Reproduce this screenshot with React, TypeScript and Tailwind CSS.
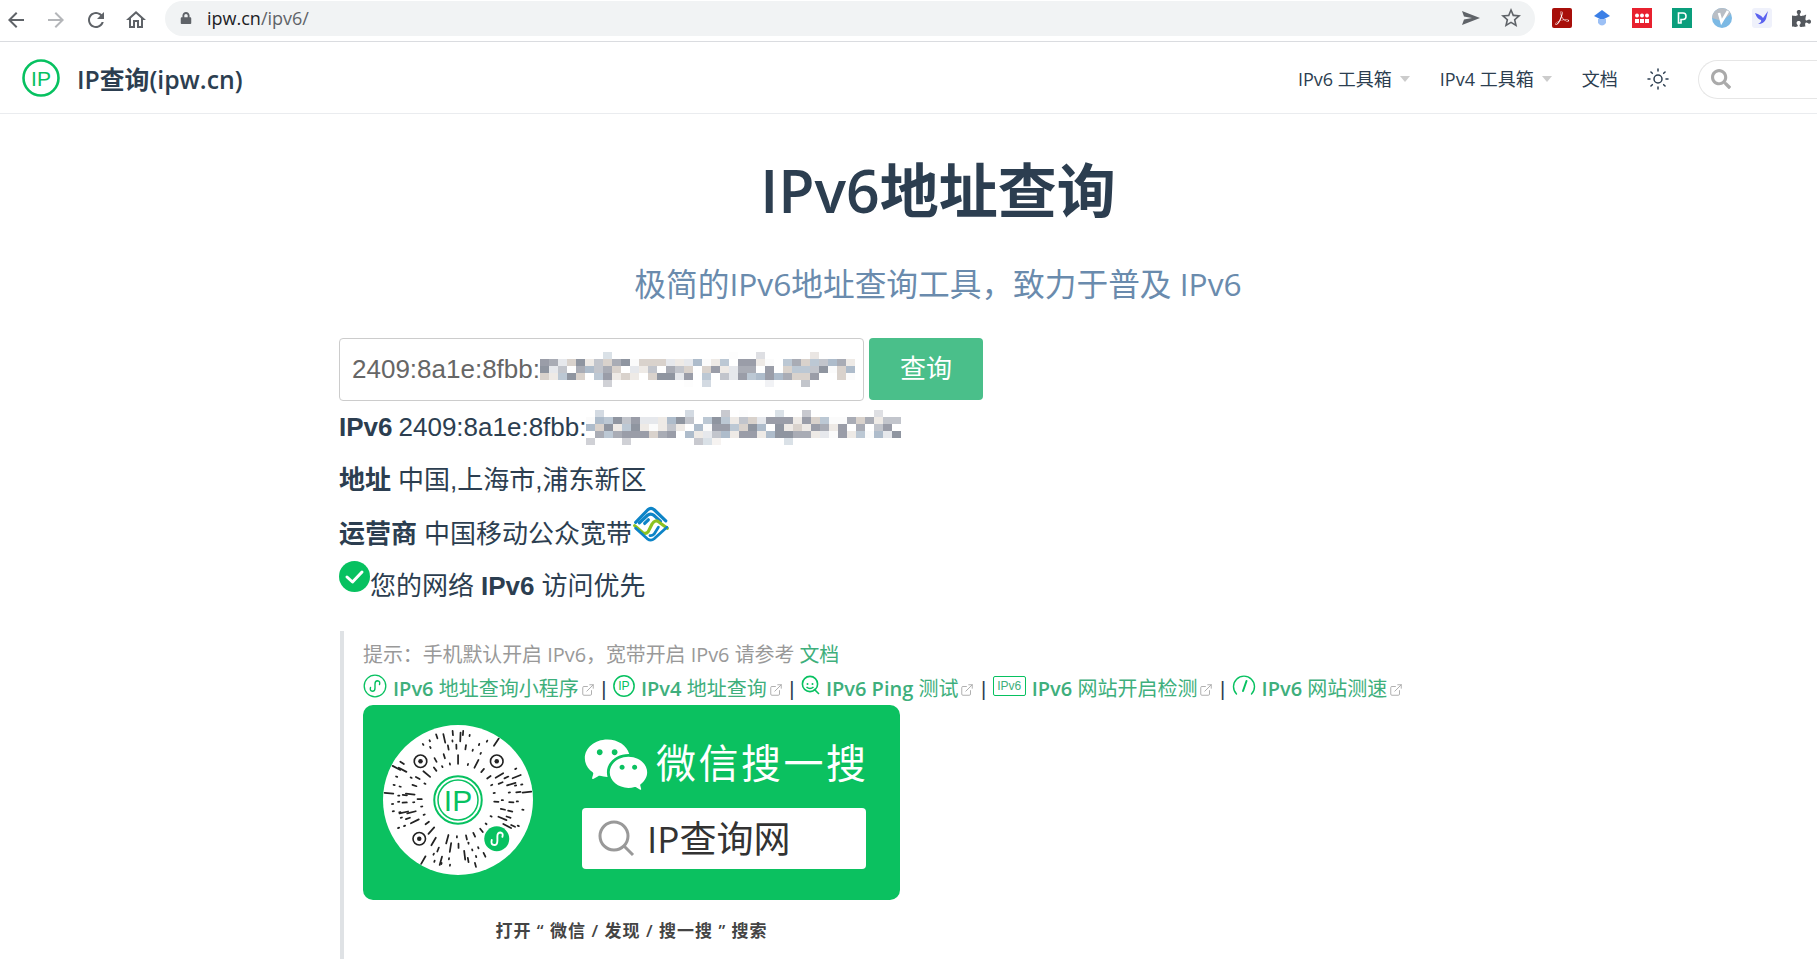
import type { ReactNode } from "react";
import { ExternalLink, Sun } from "lucide-react";
import { FaLock, FaPuzzlePiece, FaSearch } from "react-icons/fa";
import { RiWechatFill } from "react-icons/ri";
import { SiAdobeacrobatreader } from "react-icons/si";

const seeded = (seed: number) => {
  let state = seed;
  return () => {
    state = (state * 9301 + 49297) % 233280;
    return state / 233280;
  };
};

const mosaicColors = ["#a9acb5", "#c2c5cc", "#e6e8ec", "#9a9da8", "#d9d2cc", "#bcc8d4", "#8f95a0", "#eeeae6", "#aebccb", "#fbfbfb"];

function Mosaic({ width, seed }: { width: number; seed: number }) {
  const random = seeded(seed);
  const cols = Math.floor(width / 9);
  const cells = [];
  for (let row = 0; row < 5; row++) {
    for (let col = 0; col < cols; col++) {
      const sparse = row === 0 || row === 4;
      if (random() < (sparse ? 0.82 : 0.08)) continue;
      cells.push(
        <rect
          key={`${row}-${col}`}
          x={col * 9}
          y={row * 7}
          width={9}
          height={7}
          fill={mosaicColors[Math.floor(random() * mosaicColors.length)]}
          opacity={sparse ? 0.55 : 1}
        />,
      );
    }
  }
  return (
    <svg width={width} height={35} className="shrink-0">
      {cells}
    </svg>
  );
}

function MobileLogo() {
  return (
    <svg width="38" height="38" viewBox="0 0 36 36" className="shrink-0" fill="none" strokeLinecap="round" strokeLinejoin="round">
      <path d="M3.5 16.5 L15 4.5 Q18 2 21 4.5 L32 15" stroke="#0d84c7" strokeWidth="3" />
      <path d="M7 17 L15 9.5 Q18 7.5 21 10 L27 15.5" stroke="#0d84c7" strokeWidth="3" />
      <path d="M2.5 19.5 L10 26 Q13 28 15.5 25 L19 18 Q22 13 26 16.5 L33.5 22" stroke="#8cc220" strokeWidth="3" />
      <path d="M12 17.5 L15.5 14" stroke="#0d84c7" strokeWidth="3" />
      <path d="M3.5 22 L14.5 32 Q18 34.5 21 32 L33 21" stroke="#0d84c7" strokeWidth="2.6" />
      <path d="M17 29 Q19 29.5 21 27.5 L25 21" stroke="#0d84c7" strokeWidth="2.6" />
    </svg>
  );
}

function CheckBadge() {
  return (
    <svg width="31" height="31" viewBox="0 0 31 31" className="shrink-0">
      <circle cx="15.5" cy="15.5" r="15.5" fill="#07c160" />
      <path d="M8 16 L13.5 21 L23 11" fill="none" stroke="#fff" strokeWidth="3" strokeLinecap="round" strokeLinejoin="round" />
    </svg>
  );
}

function IpLogo({ size }: { size: number }) {
  return (
    <svg width={size} height={size} viewBox="0 0 38 38" className="shrink-0">
      <circle cx="19" cy="19" r="17.5" fill="none" stroke="#07c160" strokeWidth="2.6" />
      <text x="19" y="26.5" textAnchor="middle" fontSize="21" fontFamily="Liberation Sans" fill="#07c160">
        IP
      </text>
    </svg>
  );
}

function MiniLink({ size = 24 }: { size?: number }) {
  return (
    <svg width={size} height={size} viewBox="0 0 24 24" fill="none" stroke="#07c160" className="shrink-0">
      <circle cx="12" cy="12" r="10.8" strokeWidth="1.3" />
      <path d="M7.5 13.5 Q6.5 17 9.5 17.2 Q12 17.2 12 14 L12 10 Q12 6.8 14.5 6.8 Q17.5 7 16.5 10.5" strokeWidth="1.4" strokeLinecap="round" />
    </svg>
  );
}

function LoupeIcon() {
  return (
    <svg width="19" height="21" viewBox="0 0 19 21" fill="none" stroke="#07c160" strokeWidth="1.6" className="shrink-0">
      <circle cx="9" cy="9" r="7.6" />
      <circle cx="6.5" cy="9" r="1" fill="#07c160" stroke="none" />
      <circle cx="11.5" cy="9" r="1" fill="#07c160" stroke="none" />
      <path d="M5.5 12 Q9 15 12.5 12 M13 14 L18 19" />
    </svg>
  );
}

function Ipv6Tag() {
  return (
    <span className="flex h-[20px] w-[33px] shrink-0 items-center justify-center rounded-[2px] border border-[#07c160] font-['Liberation_Sans',sans-serif] text-[12px] font-normal text-[#3eaf7c]">
      IPv6
    </span>
  );
}

function GaugeIcon() {
  return (
    <svg width="24" height="24" viewBox="0 0 24 24" fill="none" stroke="#07c160" className="shrink-0">
      <path d="M4.5 20 A10.5 10.5 0 1 1 19.5 20" strokeWidth="1.4" strokeLinecap="round" />
      <path d="M11 17 L14.5 7" strokeWidth="2" strokeLinecap="round" />
    </svg>
  );
}

function QrCode() {
  const random = seeded(11);
  const dashes = [];
  for (const radius of [29, 35, 41, 47, 52]) {
    const count = Math.round(radius * 0.95);
    for (let i = 0; i < count; i++) {
      if (random() < 0.25) continue;
      const angle = (i / count) * Math.PI * 2 + random() * 0.05;
      const length = random() < 0.22 ? 7 : random() < 0.5 ? 3.4 : 1;
      const inFinder = [
        [-30, -31],
        [31, -31],
        [-31, 31],
        [29, 30],
      ].some(([fx, fy]) => Math.hypot(Math.cos(angle) * radius - fx, Math.sin(angle) * radius - fy) < 12);
      if (inFinder) continue;
      dashes.push(
        <line
          key={`${radius}-${i}`}
          x1={60 + Math.cos(angle) * radius}
          y1={60 + Math.sin(angle) * radius}
          x2={60 + Math.cos(angle) * (radius + length)}
          y2={60 + Math.sin(angle) * (radius + length)}
          stroke="#222"
          strokeWidth="1.4"
          strokeLinecap="round"
        />,
      );
    }
  }
  const finders = [
    [30, 29],
    [91, 29],
    [29, 91],
  ];
  return (
    <svg width="150" height="150" viewBox="0 0 120 120" className="shrink-0">
      <circle cx="60" cy="60" r="60" fill="#fff" />
      {dashes}
      {finders.map(([x, y]) => (
        <g key={`${x}-${y}`}>
          <circle cx={x} cy={y} r="5" fill="none" stroke="#222" strokeWidth="1.3" />
          <circle cx={x} cy={y} r="1.8" fill="#222" />
        </g>
      ))}
      <circle cx="60" cy="60" r="19" fill="none" stroke="#07c160" strokeWidth="1.6" />
      <circle cx="60" cy="60" r="16" fill="none" stroke="#07c160" strokeWidth="1.2" />
      <text x="60" y="69" textAnchor="middle" fontSize="24" fontFamily="Liberation Sans" fill="#07c160">
        IP
      </text>
      <circle cx="91" cy="91" r="10" fill="#07c160" />
      <path d="M87 92 Q86 96 89 96 Q91.5 96 91.5 92.5 L91.5 89 Q91.5 86 94 86 Q96.5 86.5 95.5 89.5" fill="none" stroke="#fff" strokeWidth="1.5" strokeLinecap="round" />
    </svg>
  );
}

function ExtIcon({ className, children }: { className: string; children?: ReactNode }) {
  return <span className={`flex h-[20px] w-[20px] shrink-0 items-center justify-center overflow-hidden ${className}`}>{children}</span>;
}

function ChromeIcon({ d, className }: { d: string; className?: string }) {
  return (
    <svg width="24" height="24" viewBox="0 0 24 24" fill="currentColor" className={`shrink-0 ${className ?? ""}`}>
      <path d={d} />
    </svg>
  );
}

function BrowserBar() {
  return (
    <div className="flex h-[42px] shrink-0 items-center border-b border-[#dadce0] bg-white text-[#5f6368]">
      <div className="mb-[2px] flex w-[165px] shrink-0 items-center gap-[16px] pl-[4px]">
        <ChromeIcon d="M20 11H7.83l5.59-5.59L12 4l-8 8 8 8 1.41-1.41L7.83 13H20v-2z" />
        <ChromeIcon d="M12 4l-1.41 1.41L16.17 11H4v2h12.17l-5.58 5.59L12 20l8-8z" className="text-[#b4b6b9]" />
        <ChromeIcon d="M17.65 6.35C16.2 4.9 14.21 4 12 4c-4.42 0-7.99 3.58-7.99 8s3.57 8 7.99 8c3.73 0 6.84-2.55 7.73-6h-2.08c-.82 2.33-3.04 4-5.65 4-3.31 0-6-2.69-6-6s2.69-6 6-6c1.66 0 3.14.69 4.22 1.78L13 11h7V4l-2.35 2.35z" />
        <ChromeIcon d="M12 5.69l5 4.5V18h-2v-6H9v6H7v-7.81l5-4.5M12 3L2 12h3v8h6v-6h2v6h6v-8h3L12 3z" />
      </div>
      <div className="mb-[5px] flex h-[35px] w-[1370px] shrink-0 items-center rounded-full bg-[#f1f3f4] pl-[15px] pr-[12px]">
        <FaLock size={12} />
        <span className="ml-[15px] font-['Open_Sans',sans-serif] text-[18px]">
          <span className="text-[#202124]">ipw.cn</span>/ipv6/
        </span>
        <div className="ml-auto flex items-center gap-[19px]">
          <svg width="18" height="14" viewBox="0 0 18 14" fill="#5f6368">
            <path d="M0 0 L18 7 L0 14 L2 8.5 L10 7 L2 5.5 Z" />
          </svg>
          <ChromeIcon d="M22 9.24l-7.19-.62L12 2 9.19 8.63 2 9.24l5.46 4.73L5.82 21 12 17.27 18.18 21l-1.63-7.03L22 9.24zM12 15.4l-3.76 2.27 1-4.28-3.32-2.88 4.38-.38L12 6.1l1.71 4.04 4.38.38-3.32 2.88 1 4.28L12 15.4z" />
        </div>
      </div>
      <div className="mb-[5px] flex items-center gap-[20px] pl-[17px]">
        <ExtIcon className="rounded-[2px] bg-[#a80f0a] text-white">
          <SiAdobeacrobatreader size={14} />
        </ExtIcon>
        <ExtIcon className="">
          <svg width="20" height="20" viewBox="0 0 20 20">
            <path d="M10 2 L18 8 L10 12 L2 8 Z" fill="#3b7fe6" />
            <path d="M6 11 L14 11 L14 15 Q10 20 6 15 Z" fill="#9cc0f5" />
          </svg>
        </ExtIcon>
        <ExtIcon className="bg-[#e8212f]">
          <svg width="16" height="10" viewBox="0 0 16 10" fill="#fff">
            <circle cx="3" cy="2.5" r="2" />
            <circle cx="8" cy="2.5" r="2" />
            <circle cx="13" cy="2.5" r="2" />
            <path d="M1 10 V6 H5 V10 Z M6 10 V6 H10 V10 Z M11 10 V6 H15 V10 Z" />
          </svg>
        </ExtIcon>
        <ExtIcon className="bg-[#0a9e7c]">
          <svg width="10" height="12" viewBox="0 0 10 12" fill="none" stroke="#fff" strokeWidth="1.6">
            <path d="M1.5 1 H6 Q9 1 9 4 Q9 7.5 6 7.5 H4 V11 H1.5 Z" />
          </svg>
        </ExtIcon>
        <ExtIcon className="rounded-full bg-[#7cb9e4]">
          <svg width="20" height="20" viewBox="0 0 20 20">
            <path d="M0 0 H20 V5 L10 13 L0 10 Z" fill="#b9bec5" />
            <path d="M7 5 L9.5 14 L16 3" fill="none" stroke="#fff" strokeWidth="2.6" />
          </svg>
        </ExtIcon>
        <ExtIcon className="rounded-[3px] bg-[#eff1fb]">
          <svg width="16" height="16" viewBox="0 0 16 16" fill="#5b62ef">
            <path d="M1 3 Q7 5 9 8 L14 1 L12 9 Q10 14 4 14 Q8 12 7 10 Q3 9 1 3 Z" />
          </svg>
        </ExtIcon>
        <FaPuzzlePiece size={19} className="shrink-0 text-[#54585e]" />
      </div>
    </div>
  );
}

function NavBar() {
  return (
    <header className="flex h-[72px] shrink-0 items-center border-b border-[#eaecef] bg-white pl-[22px] text-[#2c3e50]">
      <IpLogo size={38} />
      <span className="ml-[17px] w-[166px] shrink-0 whitespace-nowrap pt-[4px] text-[24.8px] font-semibold leading-none">IP查询(ipw.cn)</span>
      <nav className="ml-[1055px] flex shrink-0 items-center whitespace-nowrap pt-[3px] text-[18px]">
        <span>
          <span className="font-medium">IPv6</span> 工具箱
        </span>
        <span className="ml-[8px] h-0 w-0 border-x-[5px] border-t-[6px] border-x-transparent border-t-[#ccc]" />
        <span className="ml-[30px]">
          <span className="font-medium">IPv4</span> 工具箱
        </span>
        <span className="ml-[8px] h-0 w-0 border-x-[5px] border-t-[6px] border-x-transparent border-t-[#ccc]" />
        <span className="ml-[30px]">文档</span>
        <Sun size={24} strokeWidth={1.5} className="ml-[28px] shrink-0" />
      </nav>
      <div className="ml-[28px] mt-[3px] flex h-[39px] w-[160px] shrink-0 items-center rounded-l-[20px] border border-r-0 border-[#e6e6e6] pl-[12px] text-[#aaa]">
        <FaSearch size={20} />
      </div>
    </header>
  );
}

function ToolLink({ icon, latin, label }: { icon: ReactNode; latin: string; label: string }) {
  return (
    <span className="flex shrink-0 items-center">
      <span className="mb-[6px] flex">{icon}</span>
      <span className="ml-[6px] whitespace-pre text-[20px] text-[#3eaf7c]">
        <span className="font-semibold">{latin}</span> {label}
      </span>
      <ExternalLink size={14} strokeWidth={1.6} className="ml-[2px] mt-[2px] text-[#aaa]" />
    </span>
  );
}

function Sep() {
  return <span className="mx-[6.5px] font-['Liberation_Sans',sans-serif] text-[20px] text-[#2c3e50]">|</span>;
}

function SearchBanner() {
  return (
    <div className="flex h-[195px] w-[537px] items-center rounded-[10px] bg-[#0bc160] pb-[5px] pl-[20px]">
      <QrCode />
      <div className="ml-[49px] flex w-[284px] shrink-0 flex-col">
        <div className="flex items-center">
          <RiWechatFill size={68} className="shrink-0 text-white" />
          <span className="ml-[6px] mt-[-4px] whitespace-nowrap text-[40px] leading-none tracking-[2.5px] text-white">微信搜一搜</span>
        </div>
        <div className="mt-[9px] flex h-[61px] items-center rounded-[4px] bg-white pl-[16px]">
          <svg width="37" height="37" viewBox="0 0 37 37" fill="none" stroke="#999" strokeWidth="3" className="shrink-0">
            <circle cx="16" cy="16" r="14" />
            <path d="M26 26 L35 35" />
          </svg>
          <span className="ml-[12px] text-[37px] leading-none text-[#333]">IP查询网</span>
        </div>
      </div>
    </div>
  );
}

export default function App() {
  return (
    <div className="flex h-[959px] w-[1817px] flex-col overflow-hidden bg-white font-['Open_Sans','Noto_Sans_CJK_SC',sans-serif] text-[#2c3e50]">
      <BrowserBar />
      <NavBar />
      <main className="ml-[339px] flex w-[1198px] flex-col">
        <h1 className="mt-[41px] text-center text-[59px] font-bold leading-[70px]">
          <span className="font-semibold">IPv6</span>地址查询
        </h1>
        <p className="mt-[35px] text-center text-[31.7px] leading-[48px] text-[#6a8bad]">极简的IPv6地址查询工具，致力于普及 IPv6</p>

        <div className="mt-[30px] flex gap-[5px] font-['Liberation_Sans','Noto_Sans_CJK_SC',sans-serif] text-[26px]">
          <div className="flex h-[63px] w-[525px] items-center overflow-hidden rounded-[4px] border border-[#ccc] pl-[12px] text-[#666]">
            2409:8a1e:8fbb:
            <Mosaic width={315} seed={7} />
          </div>
          <button className="h-[62px] w-[114px] rounded-[4px] bg-[#4abf8a] pt-[1px] text-[26px] text-white">查询</button>
        </div>

        <div className="mt-[6px] flex flex-col gap-[13px] font-['Liberation_Sans','Noto_Sans_CJK_SC',sans-serif] text-[26px]">
          <div className="flex h-[40px] items-center">
            <b>IPv6</b>
            <span className="ml-[6px]">2409:8a1e:8fbb:</span>
            <Mosaic width={315} seed={23} />
          </div>
          <div className="flex h-[40px] items-center">
            <b>地址</b>
            <span className="ml-[7px]">中国,上海市,浦东新区</span>
          </div>
          <div className="flex h-[40px] items-center pt-[2px]">
            <b>运营商</b>
            <span className="ml-[7px]">中国移动公众宽带</span>
            <span className="mb-[20px] flex">
              <MobileLogo />
            </span>
          </div>
          <div className="flex h-[40px] items-center">
            <span className="mb-[20px] flex">
              <CheckBadge />
            </span>
            <span>您的网络</span>
            <b className="mx-[7px]">IPv6</b>
            <span>访问优先</span>
          </div>
        </div>

        <blockquote className="ml-px mt-[25px] h-[340px] border-l-4 border-[#dfe2e5] pl-[19px] pt-[7px]">
          <div className="flex h-[34px] items-center whitespace-pre text-[19.9px] text-[#999]">
            提示：手机默认开启 IPv6，宽带开启 IPv6 请参考 <span className="text-[#3eaf7c]">文档</span>
          </div>
          <div className="flex h-[33px] items-center whitespace-nowrap">
            <ToolLink icon={<MiniLink />} latin="IPv6" label="地址查询小程序" />
            <Sep />
            <ToolLink icon={<IpLogo size={22} />} latin="IPv4" label="地址查询" />
            <Sep />
            <ToolLink icon={<LoupeIcon />} latin="IPv6 Ping" label="测试" />
            <Sep />
            <ToolLink icon={<Ipv6Tag />} latin="IPv6" label="网站开启检测" />
            <Sep />
            <ToolLink icon={<GaugeIcon />} latin="IPv6" label="网站测速" />
          </div>
          <SearchBanner />
          <p className="mt-[18px] w-[537px] pt-px text-center text-[17px] font-semibold leading-[24px] tracking-[1px] text-[#444]">打开 “ 微信 / 发现 / 搜一搜 ” 搜索</p>
        </blockquote>
      </main>
    </div>
  );
}
